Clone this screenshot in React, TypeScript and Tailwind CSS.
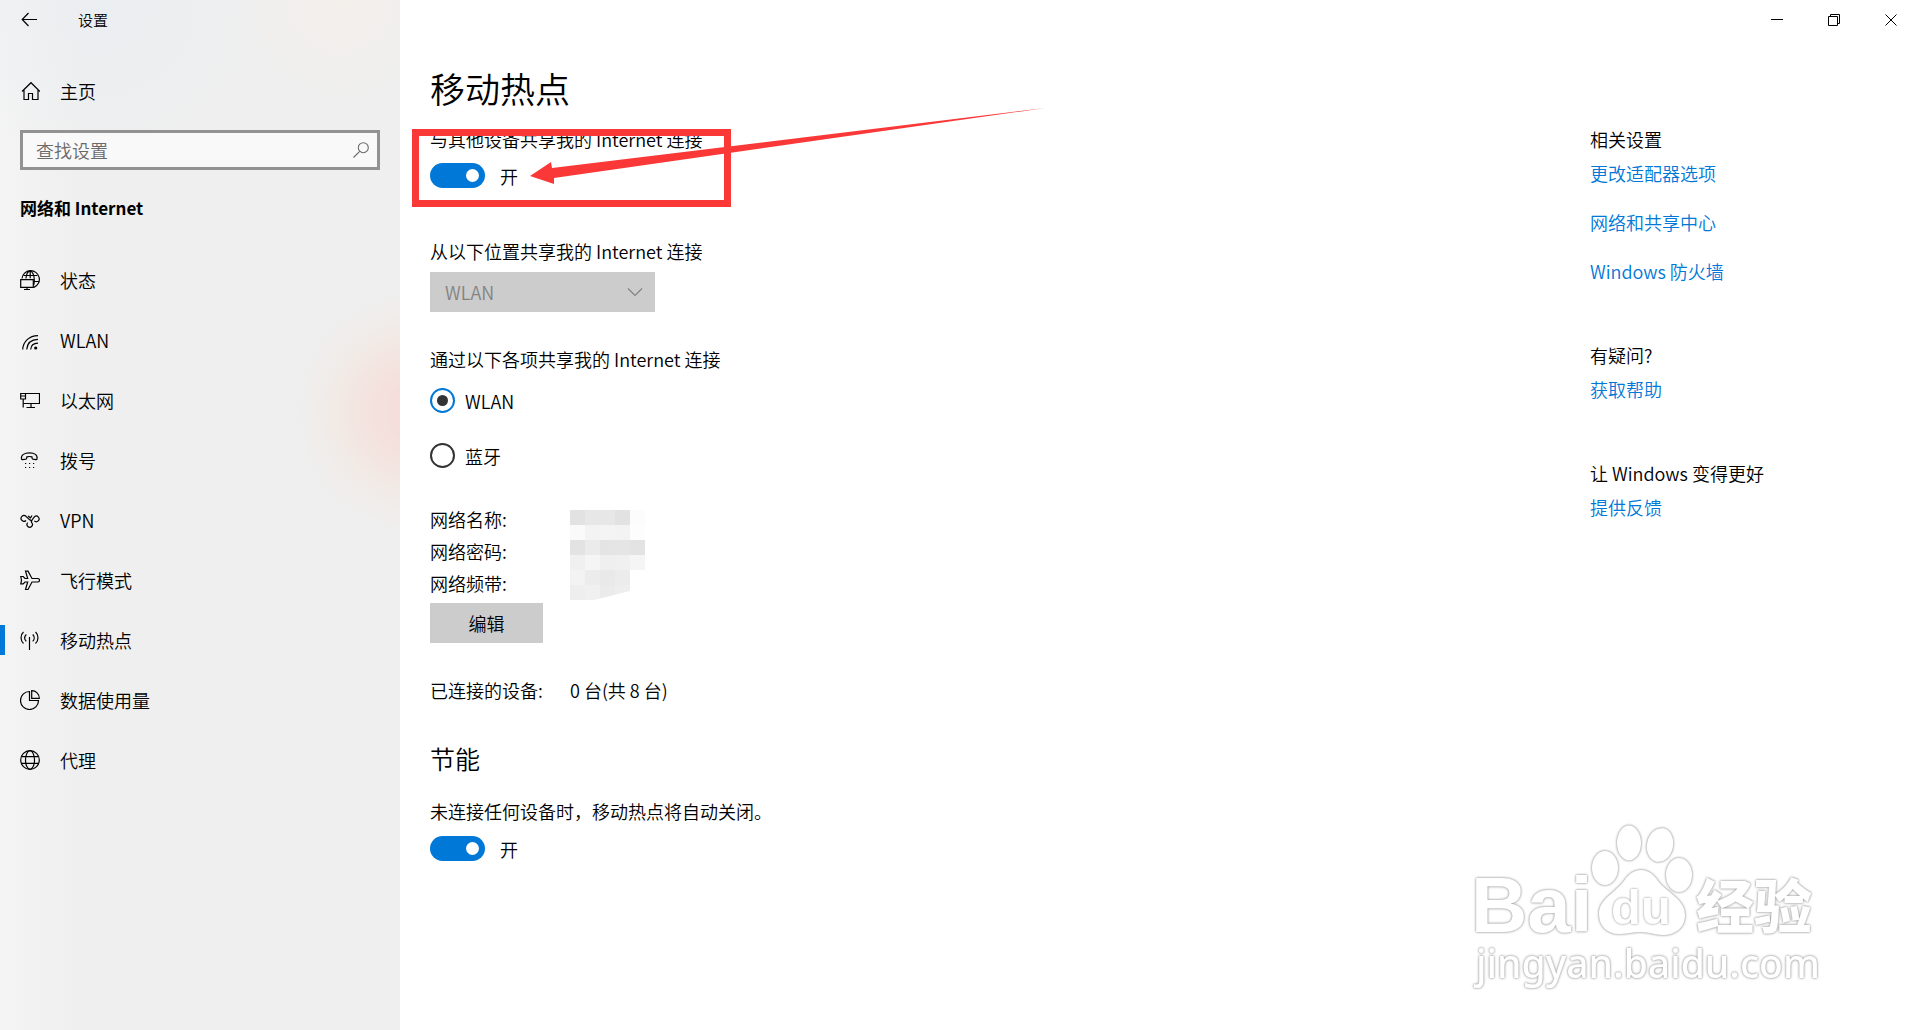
import { useState } from 'react';
import type { ReactNode } from 'react';

type NavItem = {
  id: string;
  label: string;
  icon: ReactNode;
};

const NAV_ITEMS: NavItem[] = [
  {
    id: 'status',
    label: '状态',
    icon: (
      <>
        <path d="M2 8.5A8.7 8.7 0 1 1 14 17.4" />
        <path d="M3.5 5.5h14M14 11.5h5M6 8.5C6.3 4.5 8 1.2 10.2 1.2S14.3 5 14.3 10c0 2-.2 3.500-.6 5M10.200 1.200v7" />
        <path d="M.7 9.700h12.600v7.600H.7zM7 17.500v2M4 19.500h6" />
      </>
    ),
  },
  {
    id: 'wlan',
    label: 'WLAN',
    icon: (
      <>
        <path d="M2.700 19.500C3.200 11.500 9 5.800 18 5.600M6.700 19.500C7.200 13.500 11 9.600 18 9.400M10.700 19.500c.2-3.800 3-6.300 7.300-6.400" />
        <circle cx="15.700" cy="18" r="1.600" fill="currentColor" stroke="none" />
      </>
    ),
  },
  {
    id: 'ethernet',
    label: '以太网',
    icon: (
      <>
        <path d="M5.500 3.500h14v10H3.500M11 13.500v4M6.500 17.500h8.500" />
        <path d="M.7 3.500h4.800v5.500H.7zM.7 6h4.800M3.200 9v8.500" />
      </>
    ),
  },
  {
    id: 'dialup',
    label: '拨号',
    icon: (
      <>
        <path d="M1.500 8.800c-.8-3.800 3-6 8-6s8.300 2.200 7.500 6c-.1.700-.5.900-1 .8l-3.200-.5c-.5-.1-.7-.5-.7-1l-.1-1.200c-1.600-.5-3.600-.5-5.200 0l-.1 1.200c0 .5-.2.900-.7 1l-3.400.5c-.6.100-1-.2-1.100-.8z" />
        <path d="M5 13.500h1.200M9 13.500h1.200M13 13.500h1.200M5 17.500h1.200M9 17.500h1.200M13 17.500h1.200" />
      </>
    ),
  },
  {
    id: 'vpn',
    label: 'VPN',
    icon: (
      <>
        <path d="M6 10.500a2.900 2.900 0 1 1 0-4.200c2 2 3.800 4.400 6.300 4.700" />
        <path d="M8 6l2.500 1.800L12 5.500" />
        <path d="M7.700 12.700a2.700 2.700 0 1 0 4 0c-.9-1-.3-2 .8-3.300l2-2.700a2.800 2.800 0 1 1-.2 4.200" />
      </>
    ),
  },
  {
    id: 'airplane',
    label: '飞行模式',
    icon: (
      <path d="M12 8.500h5.500c1.200 0 2 .8 2 1.700s-.8 1.800-2 1.800H12l-4 7.500H5.500L7.700 12H5l-1.800 1.900H.8l.7-3.700-.7-3.700h2.400L5 8.500h2.700L5.500 1.200H8z" />
    ),
  },
  {
    id: 'hotspot',
    label: '移动热点',
    icon: (
      <>
        <path d="M9.500 7v13" />
        <path d="M3.500 2C.2 4.800.2 10.700 3.500 13.500M15.500 2c3.300 2.800 3.300 8.700 0 11.500M6.300 4.500c-2 2-2 4.800 0 6.800M12.700 4.500c2 2 2 4.800 0 6.800" />
      </>
    ),
  },
  {
    id: 'usage',
    label: '数据使用量',
    icon: (
      <>
        <path d="M9.500 1.500a9 9 0 1 0 9 9h-9z" />
        <path d="M11.700.7v7.600h7.600c0-4.500-3.300-7.600-7.600-7.600z" />
      </>
    ),
  },
  {
    id: 'proxy',
    label: '代理',
    icon: (
      <>
        <circle cx="10" cy="10" r="9.300" />
        <ellipse cx="10" cy="10" rx="4.500" ry="9.300" />
        <path d="M1.300 6.700h17.400M1.300 13.300h17.400" />
      </>
    ),
  },
];

// Opaque blocks hiding the network name, password and band
const MASK_ROWS = [
  ['bg-[#e2e2e2]', 'bg-[#e7e7e7]', 'bg-[#e7e7e7]', 'bg-[#e2e2e2]', 'bg-[#fcfcfc]'],
  ['bg-[#fafafa]', 'bg-[#f3f3f3]', 'bg-[#f4f4f4]', 'bg-[#f3f3f3]', 'bg-[#fdfdfd]'],
  ['bg-[#e3e3e3]', 'bg-[#ebebeb]', 'bg-[#e4e4e4]', 'bg-[#e5e5e5]', 'bg-[#e3e3e3]'],
  ['bg-[#f0f0f0]', 'bg-[#f5f5f5]', 'bg-[#efefef]', 'bg-[#f0f0f0]', 'bg-[#f5f5f5]'],
  ['bg-[#f3f3f3]', 'bg-[#ececec]', 'bg-[#e9e9e9]', 'bg-[#ececec]', 'bg-white'],
  ['bg-[#eeeeee]', 'bg-[#f0f0f0]', 'bg-[#ebebeb]', 'bg-[#eeeeee]', 'bg-white'],
];

function Icon({ children }: { children: ReactNode }) {
  return (
    <svg viewBox="0 0 20 20" className="h-5 w-5 shrink-0" fill="none" stroke="currentColor" strokeWidth="1.2" aria-hidden="true">
      {children}
    </svg>
  );
}

function Toggle({ id, label }: { id: string; label: string }) {
  const [on, setOn] = useState(true);
  return (
    <div className="flex h-[25px] items-center gap-[15px]">
      <input
        id={id}
        type="checkbox"
        role="switch"
        aria-label={label}
        checked={on}
        onChange={(e) => setOn(e.target.checked)}
        className="flex h-[25px] w-[55px] appearance-none items-center rounded-full bg-[#999999] px-1.5 before:h-[13px] before:w-[13px] before:rounded-full before:bg-white checked:justify-end checked:bg-[#0078d7]"
      />
      <label htmlFor={id}>{on ? '开' : '关'}</label>
    </div>
  );
}

function Sidebar() {
  const [active, setActive] = useState('hotspot');

  return (
    <aside className="w-[400px] shrink-0 bg-[#efefef] bg-[radial-gradient(circle_at_415px_412px,#f5dad8_0,#f4e3de_50px,#f1ebe7_85px,#efefef00_120px),radial-gradient(circle_at_340px_0px,#f4efeb_0,#efefef00_100px),radial-gradient(circle_at_100px_0px,#ebeef1_0,#efefef00_170px),linear-gradient(90deg,#f4f4f4_0,#efefef_80px)]">
      <div className="flex h-10 items-center">
        <button type="button" aria-label="返回" className="flex h-10 w-[60px] items-center pl-5">
          <Icon>
            <path d="M17 9.500H2.500M8.500 3l-6.300 6.500L8.500 16" />
          </Icon>
        </button>
        <span className="pl-[18px] text-[15px]">设置</span>
      </div>

      <a href="#home" className="mt-[21px] flex h-[60px] items-center gap-5 px-5">
        <Icon>
          <path d="M2 10.500L11 1.700l9 8.800M4 9v9.500h4.500v-6h4v6H18V9" />
        </Icon>
        <span>主页</span>
      </a>

      <div className="mx-5 mt-[9px] flex h-10 items-center border-[3px] border-[#929292] bg-[#f9f9f9] pr-2">
        <input
          type="search"
          aria-label="查找设置"
          placeholder="查找设置"
          className="min-w-0 flex-1 bg-transparent pl-[13px] outline-none placeholder:text-[#6a6a6a]"
        />
        <svg viewBox="0 0 16 16" className="h-4 w-4 text-[#6a6a6a]" fill="none" stroke="currentColor" strokeWidth="1.1" aria-hidden="true">
          <circle cx="10.300" cy="5.700" r="5" />
          <path d="M6.700 9.300L.5 15.500" />
        </svg>
      </div>

      <h2 className="mx-5 mt-[26px] h-[54px] text-[17px] leading-6 font-bold">网络和 Internet</h2>

      <nav>
        {NAV_ITEMS.map((item) => (
          <a
            key={item.id}
            href={`#${item.id}`}
            onClick={() => setActive(item.id)}
            aria-current={active === item.id ? 'page' : undefined}
            className="flex h-[60px] items-center"
          >
            <span className={`h-[30px] w-[5px] ${active === item.id ? 'bg-[#0078d7]' : ''}`} />
            <span className="ml-[15px] flex items-center gap-5">
              <Icon>{item.icon}</Icon>
              {item.label}
            </span>
          </a>
        ))}
      </nav>
    </aside>
  );
}

function WindowControls() {
  return (
    <div className="flex h-10 justify-end">
      <button type="button" aria-label="最小化" className="flex w-[57px] items-center justify-center">
        <svg viewBox="0 0 12 12" className="h-3 w-3" stroke="currentColor" fill="none">
          <path d="M0 5.500h12" />
        </svg>
      </button>
      <button type="button" aria-label="还原" className="flex w-[57px] items-center justify-center">
        <svg viewBox="0 0 12 12" className="h-3 w-3" stroke="currentColor" fill="none">
          <path d="M.5 2.500h9v9h-9zM2.500 2.500v-2h9v9h-2" />
        </svg>
      </button>
      <button type="button" aria-label="关闭" className="flex w-[58px] items-center justify-center">
        <svg viewBox="0 0 12 12" className="h-3 w-3" stroke="currentColor" fill="none">
          <path d="M.5.5l11 11M11.500.5l-11 11" />
        </svg>
      </button>
    </div>
  );
}

function HotspotSettings() {
  const [share, setShare] = useState('wlan');
  const radioClass =
    'flex h-[25px] w-[25px] appearance-none items-center justify-center rounded-full border-2 border-[#333333] bg-white checked:border-[#0078d7] before:h-[11px] before:w-[11px] before:rounded-full checked:before:bg-[#333333]';

  return (
    <section className="min-w-0 flex-1">
      <div className="relative">
        <p>与其他设备共享我的 Internet 连接</p>
        <div className="mt-3">
          <Toggle id="share-toggle" label="与其他设备共享我的 Internet 连接" />
        </div>

        {/* Red callout drawn over the switch */}
        <div className="pointer-events-none absolute top-0.5 -left-[18px] h-[78px] w-[319px] border-[7px] border-[#fb3838]" />
        <svg
          viewBox="530 106 520 80"
          className="pointer-events-none absolute -top-[21px] left-[100px] h-20 w-[520px]"
          fill="#fb3838"
          aria-hidden="true"
        >
          <path d="M530 176l21-14 1 6L1045 108 554 178v6z" />
        </svg>
      </div>

      <div className="mt-[51px]">
        <label htmlFor="source">从以下位置共享我的 Internet 连接</label>
        <div className="relative mt-[9px] w-[225px]">
          <select id="source" disabled className="h-10 w-full appearance-none bg-[#cccccc] pl-[15px] text-[#838383] opacity-100">
            <option>WLAN</option>
          </select>
          <svg viewBox="0 0 16 10" className="absolute top-[15px] right-3 h-2.5 w-4" fill="none" stroke="#838383" strokeWidth="1.2" aria-hidden="true">
            <path d="M1 1.500l7 7 7-7" />
          </svg>
        </div>
      </div>

      <fieldset className="mt-[35px]">
        <legend>通过以下各项共享我的 Internet 连接</legend>
        <div className="mt-[17px] flex h-[25px] items-center gap-2.5">
          <input id="via-wlan" type="radio" name="via" checked={share === 'wlan'} onChange={() => setShare('wlan')} className={radioClass} />
          <label htmlFor="via-wlan">WLAN</label>
        </div>
        <div className="mt-[30px] flex h-[25px] items-center gap-2.5">
          <input id="via-bt" type="radio" name="via" checked={share === 'bt'} onChange={() => setShare('bt')} className={radioClass} />
          <label htmlFor="via-bt">蓝牙</label>
        </div>
      </fieldset>

      <div className="mt-[39px] flex">
        <div className="flex w-[140px] flex-col gap-2">
          <p>网络名称:</p>
          <p>网络密码:</p>
          <p>网络频带:</p>
        </div>
        <div className="mt-[3px] grid h-[90px] grid-cols-[repeat(5,15px)] grid-rows-[repeat(6,15px)] [clip-path:polygon(0_0,100%_0,100%_67%,80%_67%,80%_90%,32%_100%,0_100%)]">
          {MASK_ROWS.flat().map((color, i) => (
            <span key={i} className={color} />
          ))}
        </div>
      </div>
      <button type="button" className="mt-[3px] h-10 w-[113px] bg-[#cccccc]">
        编辑
      </button>

      <div className="mt-[35px] flex">
        <p className="w-[140px]">已连接的设备:</p>
        <p>0 台(共 8 台)</p>
      </div>

      <h2 className="mt-10 text-[25px] leading-8">节能</h2>
      <p className="mt-[25px] mb-[13px]">未连接任何设备时，移动热点将自动关闭。</p>
      <Toggle id="power-toggle" label="节能" />
    </section>
  );
}

function RelatedLinks() {
  return (
    <aside className="w-[330px] shrink-0">
      <h3>相关设置</h3>
      <div className="mt-2.5 flex flex-col items-start gap-[25px] text-[#0078d7]">
        <a href="#adapter">更改适配器选项</a>
        <a href="#sharing">网络和共享中心</a>
        <a href="#firewall">Windows 防火墙</a>
      </div>
      <h3 className="mt-[60px] mb-2.5">有疑问?</h3>
      <a href="#help" className="text-[#0078d7]">获取帮助</a>
      <h3 className="mt-[60px] mb-2.5">让 Windows 变得更好</h3>
      <a href="#feedback" className="text-[#0078d7]">提供反馈</a>
    </aside>
  );
}

function Watermark() {
  return (
    <svg
      viewBox="0 0 420 210"
      className="pointer-events-none absolute right-[60px] bottom-5 h-[210px] w-[420px] [filter:drop-shadow(0_0_1px_#999999)_drop-shadow(0_0_1px_#d0d0d0)]"
      fill="#ffffff"
    >
      <text x="31" y="132" fontSize="78" fontWeight="700" fontFamily="'Liberation Sans', sans-serif">Bai</text>
      <ellipse cx="165" cy="68" rx="13" ry="17" />
      <ellipse cx="189" cy="43" rx="12" ry="17.500" />
      <ellipse cx="220" cy="45" rx="13" ry="17" transform="rotate(12 220 45)" />
      <ellipse cx="239" cy="75" rx="13" ry="17" />
      <path d="M201 70c8 0 13 5 17 11 8 11 27 18 27 34 0 13-10 20-22 20-8 0-14-3-22-3s-14 2-22 2c-12 0-20-8-20-20 0-15 15-20 25-33 4-6 9-11 17-11z" />
      <g className="[filter:drop-shadow(0_0_1px_#888888)]">
        <text x="171" y="124" fontSize="49" fontWeight="700" fontFamily="'Liberation Sans', sans-serif">du</text>
      </g>
      <text x="256" y="128" fontSize="58" fontWeight="900" fontFamily="'Noto Sans CJK SC', sans-serif">经验</text>
      <text x="36" y="178" fontSize="39" fontWeight="500" fontFamily="'Noto Sans', sans-serif">jingyan.baidu.com</text>
    </svg>
  );
}

export default function App() {
  return (
    <div className="relative flex min-h-screen overflow-hidden bg-white font-['Noto_Sans_CJK_SC',sans-serif] text-[18px] leading-6 font-[350] text-black" lang="zh-CN">
      <Sidebar />
      <main className="min-w-0 flex-1">
        <WindowControls />
        <h1 className="mt-[23px] ml-[30px] text-[35px] leading-[50px]">移动热点</h1>
        <div className="mt-3.5 flex pl-[30px]">
          <HotspotSettings />
          <RelatedLinks />
        </div>
      </main>
      <Watermark />
    </div>
  );
}
